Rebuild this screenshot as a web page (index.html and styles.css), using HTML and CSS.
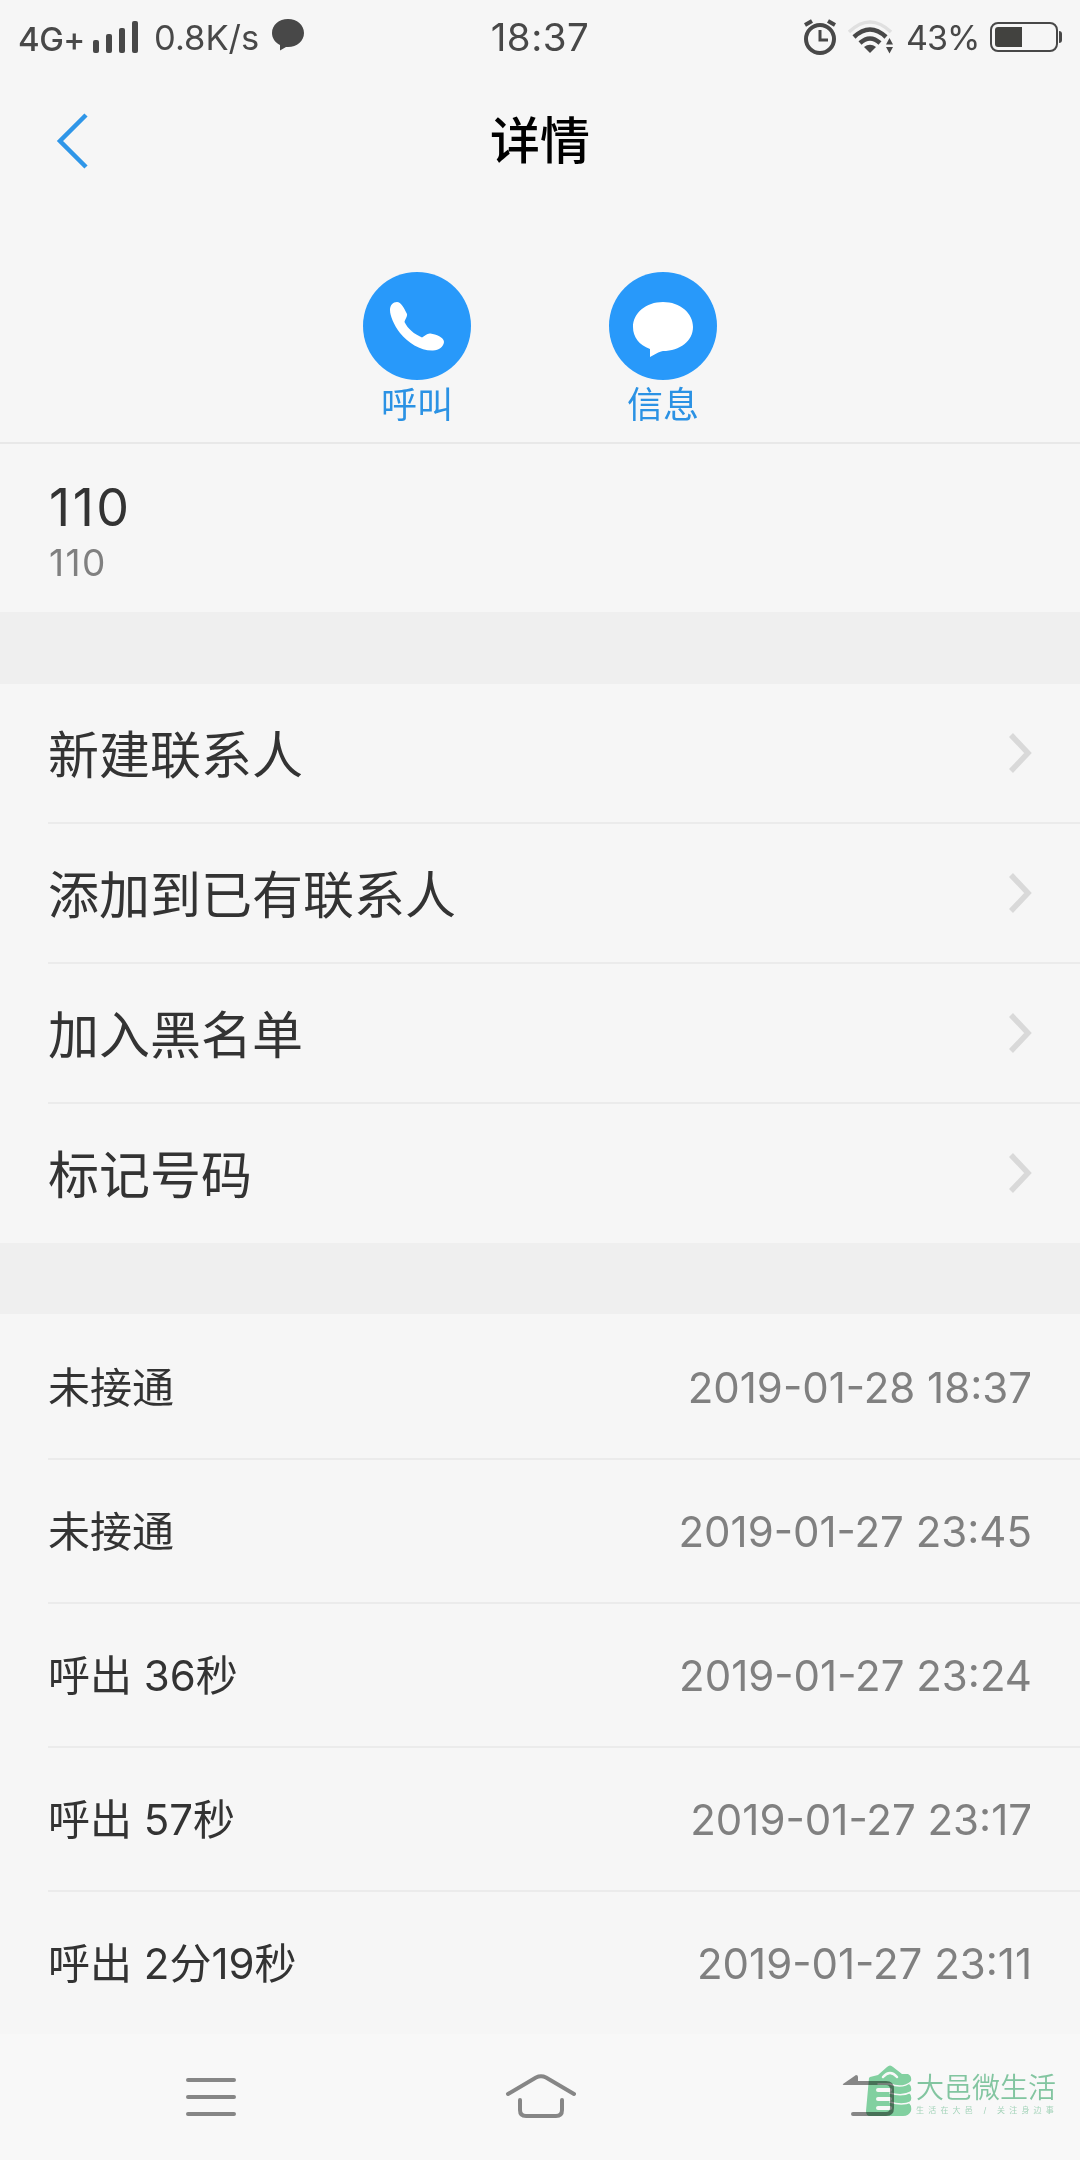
FILE: index.html
```
<!DOCTYPE html>
<html lang="zh-CN">
<head>
    <meta charset="UTF-8">
    <meta name="viewport" content="width=device-width, initial-scale=1.0">
    <title>详情</title>
    <link rel="stylesheet" href="styles.css">
</head>
<body>
    <div class="status">
        <div class="status-left">
            <span class="network">4G+</span>
            <svg class="signal" width="46" height="34" viewBox="0 0 46 34" fill="#484848">
                <rect x="0" y="20" width="6" height="13" rx="2"/>
                <rect x="13" y="14" width="6" height="19" rx="2"/>
                <rect x="26" y="8" width="6" height="25" rx="2"/>
                <rect x="39" y="1" width="6" height="32" rx="2"/>
            </svg>
            <span class="speed">0.8K/s</span>
            <svg class="bubble" width="32" height="32" viewBox="0 0 32 32" fill="#484848">
                <path d="M16 0C25 0 32 6 32 14S25 28 16 28L14 28 8 31.500V26C3 23.500 0 19 0 14 0 6 7 0 16 0z"/>
            </svg>
        </div>
        <div class="clock">18:37</div>
        <div class="status-right">
            <svg class="alarm" width="34" height="36" viewBox="0 0 34 36" fill="none" stroke="#484848">
                <circle cx="17" cy="20" r="14" stroke-width="4"/>
                <path d="M17 11V21H25" stroke-width="3"/>
                <path d="M2 6L9 2M25 2L32 6" stroke-width="4"/>
            </svg>
            <svg class="wifi" width="46" height="34" viewBox="0 0 46 34" fill="none" stroke="#484848">
                <path d="M1 12Q22 -8 43 12" stroke="#e0e0e0" stroke-width="3.500"/>
                <path d="M6 17Q22 2 38 17" stroke-width="4.500"/>
                <path d="M12 23Q22 14 32 23" stroke-width="4.500"/>
                <path d="M16 27Q22 22.500 28 27L22 33z" fill="#484848" stroke="none"/>
                <path d="M38 24.500L41.500 18 45 24.500zM38 27L41.500 33.500 45 27z" fill="#484848" stroke="none"/>
            </svg>
            <span class="percent">43%</span>
            <svg class="battery" width="73" height="30" viewBox="0 0 73 30">
                <rect x="1" y="1" width="66" height="28" rx="7" fill="none" stroke="#484848" stroke-width="2"/>
                <path d="M8 5H32V25H8Q5 25 5 22V8Q5 5 8 5z" fill="#42423f"/>
                <path d="M69 9Q72 9 72 12V18Q72 21 69 21z" fill="#484848"/>
            </svg>
        </div>
    </div>

    <div class="header">
        <svg class="back" width="32" height="56" viewBox="0 0 32 56" fill="none" stroke="#2f96e8" stroke-width="4.500">
            <path d="M30 2L4 28 30 54"/>
        </svg>
        <h1>详情</h1>
    </div>

    <div class="actions">
        <div class="action">
            <div class="circle">
                <svg width="108" height="108" viewBox="0 0 108 108" fill="#fff">
                    <path d="M34 30C38 30 41 36 44 42 44.500 45 42 47 41.500 50 45 57 51 62 59 65.500 62 64 64 61 67.500 61.500 73 62.500 81 65 81 70 80.500 75 76 78 70 78.500 58 79 45 71 37 61 31 53 27 44 27 38 27 33 30 30 34 30z"/>
                </svg>
            </div>
            <span>呼叫</span>
        </div>
        <div class="action">
            <div class="circle">
                <svg width="108" height="108" viewBox="0 0 108 108" fill="#fff">
                    <path d="M54 30C71 30 84 41 84 55S71 79 54 79Q51 79 41 85V77C30 73 24 65 24 55 24 41 37 30 54 30z"/>
                </svg>
            </div>
            <span>信息</span>
        </div>
    </div>

    <div class="contact">
        <div class="name">110</div>
        <div class="number">110</div>
    </div>

    <div class="gap"></div>

    <div class="menu">
        <div class="item">新建联系人
            <svg class="arrow" width="24" height="42" viewBox="0 0 24 42"><path d="M3 3L20 21 3 39"/></svg>
        </div>
        <div class="item">添加到已有联系人
            <svg class="arrow" width="24" height="42" viewBox="0 0 24 42"><path d="M3 3L20 21 3 39"/></svg>
        </div>
        <div class="item">加入黑名单
            <svg class="arrow" width="24" height="42" viewBox="0 0 24 42"><path d="M3 3L20 21 3 39"/></svg>
        </div>
        <div class="item">标记号码
            <svg class="arrow" width="24" height="42" viewBox="0 0 24 42"><path d="M3 3L20 21 3 39"/></svg>
        </div>
    </div>

    <div class="gap"></div>

    <div class="log">
        <div class="call"><span class="type">未接通</span><span class="time">2019-01-28 18:37</span></div>
        <div class="call"><span class="type">未接通</span><span class="time">2019-01-27 23:45</span></div>
        <div class="call"><span class="type">呼出 36秒</span><span class="time">2019-01-27 23:24</span></div>
        <div class="call"><span class="type">呼出 57秒</span><span class="time">2019-01-27 23:17</span></div>
        <div class="call"><span class="type">呼出 2分19秒</span><span class="time">2019-01-27 23:11</span></div>
    </div>

    <div class="nav">
        <svg width="72" height="50" viewBox="0 0 72 50">
            <path d="M13 8H59M13 25H59M13 42H59"/>
        </svg>
        <svg width="72" height="50" viewBox="0 0 72 50">
            <path d="M4 22L32 5.500Q37 3 42 5.500L70 22M16 28V38Q16 44 22 44H52Q58 44 58 38V28"/>
        </svg>
        <svg width="72" height="50" viewBox="0 0 72 50">
            <path d="M18 11H53Q59 11 59 17V36Q59 42 53 42H20"/>
            <path class="tip" d="M10 12L23 3Q25 3 25 5V13H11Q9 13 10 12z"/>
        </svg>
    </div>

    <div class="watermark">
        <svg width="46" height="52" viewBox="0 0 46 52">
            <path d="M4 12L12 10 21 2Q24 -1 27 2L36 9 42 9Q46 11 45 16L43 19Q46 21 45 26L43 28Q46 30 45 35L43 38Q46 41 45 46 43 51 37 51H4Q0 51 0 46L3 13z" fill="#86d6a5"/>
            <g fill="none" stroke="#fff" stroke-linecap="round">
                <path d="M17 12Q24 4 31 12" stroke-width="2.500"/>
                <path d="M12 25H24M12 34H24M12 43H24" stroke-width="4"/>
                <path d="M12 19H24Q36 24 45 17M24 28Q36 32 45 27M24 37Q36 41 45 37" stroke-width="1.500"/>
            </g>
        </svg>
        <div class="brand">
            <div class="brand-name">大邑微生活</div>
            <div class="slogan">生活在大邑 / 关注身边事</div>
        </div>
    </div>
</body>
</html>
```
FILE: styles.css
```
*{
    margin: 0;
    padding: 0;
    box-sizing: border-box;
}
body{
    position: relative;
    width: 1080px;
    height: 2160px;
    overflow: hidden;
    background: #f6f6f6;
    color: #333;
    font-family: Inter, 'Noto Sans CJK SC', sans-serif;
    font-weight: 400;
}
svg{
    display: block;
    flex: none;
}

/* status bar */
.status{
    display: grid;
    grid-template-columns: 1fr 120px 1fr;
    align-items: center;
    height: 74px;
    padding: 0 18px;
    color: #484848;
    white-space: nowrap;
}
.status-left, .status-right{
    display: flex;
    align-items: center;
}
.status-right{
    justify-content: flex-end;
}
.network{
    width: 67px;
    padding-top: 4px;
    font-size: 33px;
    font-weight: 500;
    letter-spacing: -.5px;
}
.signal{
    margin: 0 15px 0 8px;
}
.speed{
    width: 108px;
    font-size: 34.5px;
}
.bubble{
    margin: -4px 0 0 10px;
}
.clock{
    font-size: 38.5px;
    letter-spacing: .5px;
    text-align: center;
}
.alarm{
    margin-right: 11px;
}
.wifi{
    margin-right: 12px;
}
.percent{
    width: 71px;
    margin-right: 13px;
    font-size: 34px;
    letter-spacing: -1px;
}
.battery{
    margin-right: -1px;
}

/* title */
.header{
    display: grid;
    grid-template-columns: 120px 1fr 120px;
    align-items: center;
    height: 134px;
}
.back{
    margin-left: 56px;
}
h1{
    color: #000;
    font-size: 50px;
    font-weight: 500;
    line-height: 60px;
    text-align: center;
}

.actions{
    display: flex;
    justify-content: center;
    gap: 138px;
    height: 236px;
    padding-top: 64px;
    border-bottom: 2px solid #e8e8e8;
}
.action{
    width: 108px;
    color: #2b92e4;
    font-size: 36px;
    line-height: 50px;
    text-align: center;
}
.circle{
    height: 108px;
    border-radius: 50%;
    background: #2899fa;
}

.contact{
    height: 168px;
    padding: 32px 49px 0;
}
.name{
    font-size: 52px;
    line-height: 64px;
    letter-spacing: 2.5px;
}
.number{
    color: #808080;
    font-size: 37px;
    line-height: 46px;
    letter-spacing: 1.5px;
}
.gap{
    height: 72px;
    background: #efefef;
}
.menu + .gap{
    height: 71px;
}

/* lists */
.menu, .log{
    padding-left: 48px;
}
.item, .call{
    display: flex;
    justify-content: space-between;
    align-items: center;
    padding-right: 48px;
    border-bottom: 2px solid #ebebeb;
}
.item{
    height: 140px;
    padding-bottom: 2px;
    font-size: 51px;
}
.item:last-child{
    height: 139px;
    padding-bottom: 1px;
}
.item:last-child, .call:last-child{
    border-color: transparent;
}
.arrow{
    margin-top: 2px;
    fill: none;
    stroke: #d9d9d9;
    stroke-width: 5.5;
}
.log{
    height: 720px;
    padding-top: 2px;
}
.call{
    height: 144px;
    font-size: 42px;
}
.type{
    padding-bottom: 5px;
}
.time{
    padding-top: 1px;
    color: #808080;
}

/* system keys */
.nav{
    display: flex;
    justify-content: space-between;
    height: 126px;
    padding: 38px 175px 0;
    background: #f8f8f8;
}
.nav path{
    fill: none;
    stroke: #868686;
    stroke-width: 4;
    stroke-linecap: round;
}
.nav .tip{
    fill: #868686;
    stroke: none;
}
.watermark{
    position: absolute;
    left: 866px;
    top: 2065px;
    display: flex;
    color: #86cba5;
    mix-blend-mode: multiply;
}
.brand{
    margin: 7px 0 0 4px;
    white-space: nowrap;
}
.brand-name{
    font-size: 28px;
    font-weight: 350;
    line-height: 32px;
}
.slogan{
    margin-top: 1px;
    font-size: 8px;
    line-height: 10px;
    letter-spacing: 4.200px;
    opacity: .7;
}
```
